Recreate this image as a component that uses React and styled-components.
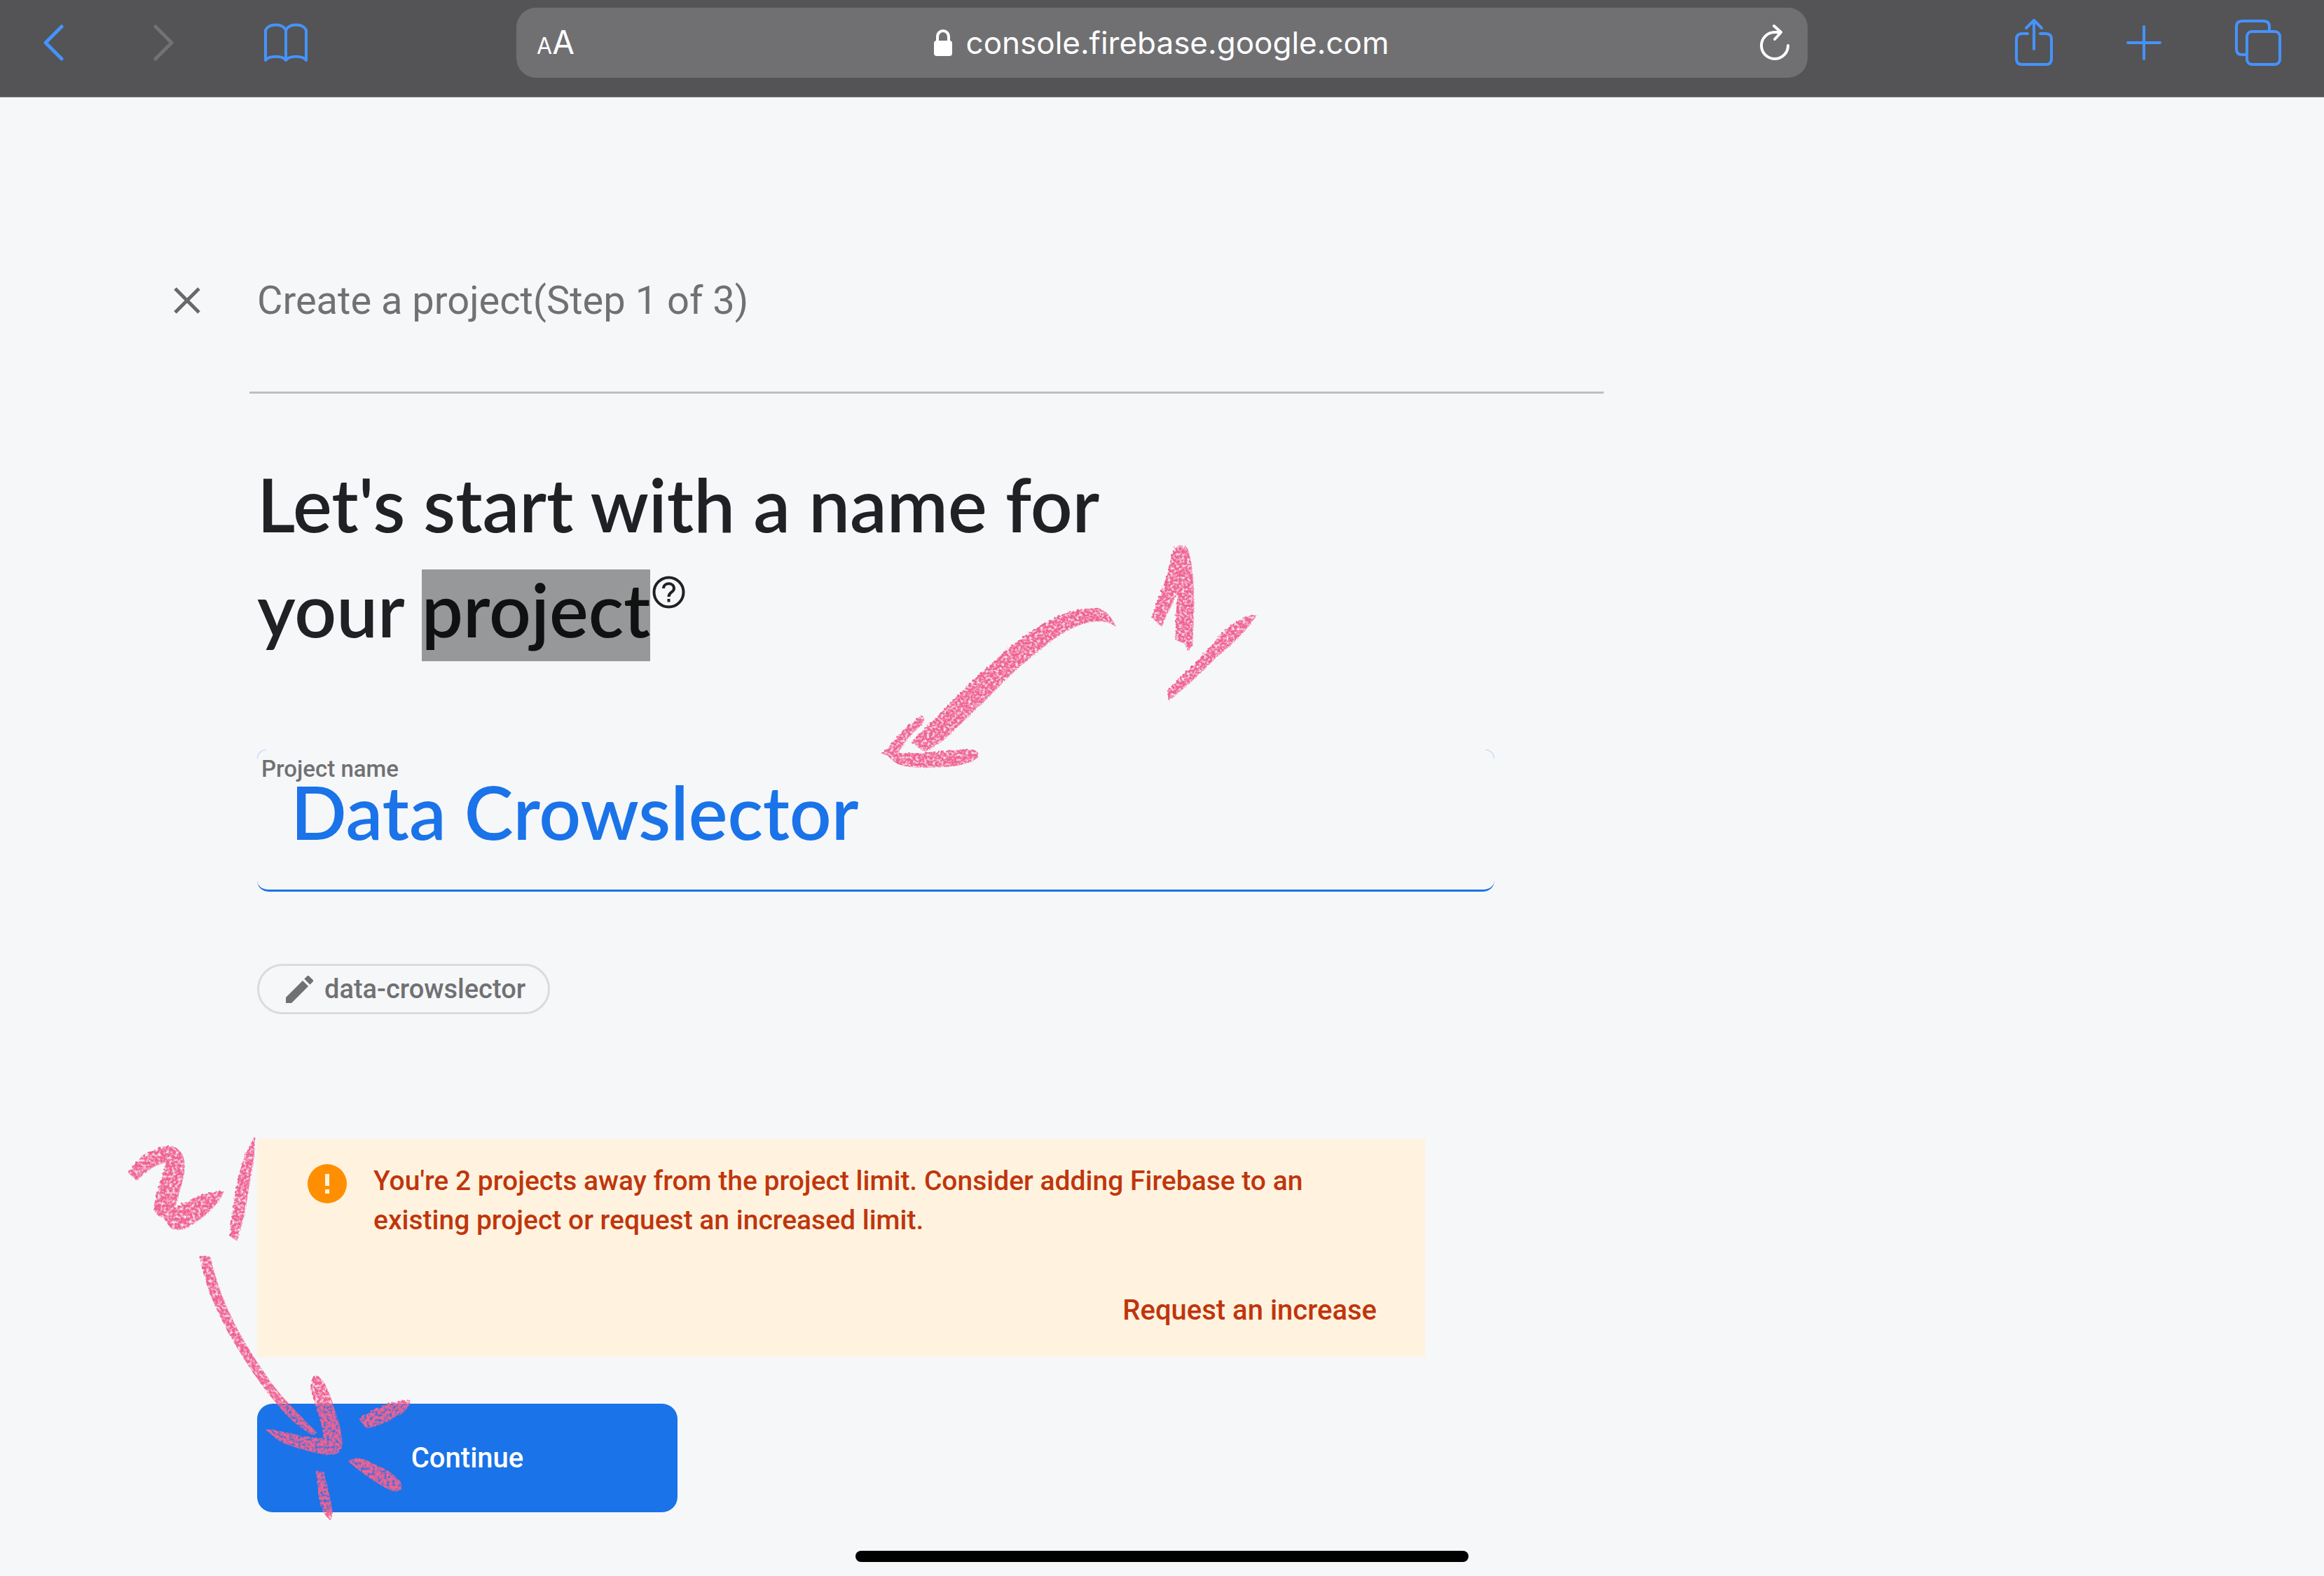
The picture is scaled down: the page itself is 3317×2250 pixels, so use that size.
import React from "react";
import styled, { createGlobalStyle } from "styled-components";

const ui = `"Inter", "Liberation Sans", sans-serif`;
const roboto = `"Roboto", "Liberation Sans", sans-serif`;
const display = `"Lato", "Open Sans", sans-serif`;

const blue = "#1a73e8";
const safariBlue = "#4593ff";
const grey = "#707173";
const rust = "#bf360c";

const GlobalStyle = createGlobalStyle`
  *, *::before, *::after { box-sizing: border-box; }
  body { margin: 0; background: #f6f7f9; font-family: ${roboto}; }
  button, input { font: inherit; margin: 0; padding: 0; border: 0; background: none; }
  h1, p { margin: 0; font-weight: inherit; }
  svg { display: block; }
`;

const Page = styled.div`
  position: relative;
  min-height: 100vh;
  display: flex;
  flex-direction: column;
`;

const Toolbar = styled.header`
  display: grid;
  grid-template-columns: 2fr 5fr 2fr;
  align-items: center;
  padding: 11px 0 27px;
  background: #545456;
  border-bottom: 1px solid #77787a;
`;

const ToolGroup = styled.nav`
  display: flex;
  align-items: center;
  justify-content: ${(p) => (p.$end ? "flex-end" : "flex-start")};
  gap: ${(p) => (p.$end ? 105 : 128)}px;
  padding: 0 61px;
`;

const IconButton = styled.button`
  flex: none;
  color: ${(p) => p.$color || safariBlue};
`;

const AddressBar = styled.div`
  display: grid;
  grid-template-columns: 1fr auto 1fr;
  align-items: center;
  height: 100px;
  padding: 0 25px 0 29px;
  border-radius: 28px;
  background: #707072;
  color: #fff;
  font-family: ${ui};
`;

const TextSize = styled.button`
  justify-self: start;
  display: flex;
  align-items: baseline;
  padding-top: 4px;
  color: #fff;
  font-size: 46px;
  line-height: 60px;
`;

const SmallA = styled.span`
  font-size: 32px;
`;

const Url = styled.span`
  display: flex;
  align-items: center;
  gap: 20px;
  padding-right: 6px;
  font-size: 44px;
  line-height: 60px;
`;

const Reload = styled(IconButton)`
  justify-self: end;
`;

const Main = styled.main`
  padding: 258px 248px 0;
`;

const StepBar = styled.div`
  display: flex;
  align-items: center;
  gap: 81px;
  color: ${grey};
  font-size: 56px;
  line-height: 64px;
`;

const Divider = styled.hr`
  height: 3px;
  max-width: 1933px;
  margin: 98px 0 0 108px;
  border: 0;
  background: #bdbec0;
`;

const Form = styled.form`
  display: flex;
  flex-direction: column;
  align-items: flex-start;
  padding-left: 119px;
`;

const Heading = styled.h1`
  max-width: 1300px;
  margin-top: 82px;
  color: #202124;
  font-family: ${display};
  font-size: 105px;
  font-weight: 600;
  line-height: 150px;
`;

const Selected = styled.mark`
  display: inline-block;
  padding-bottom: 18px;
  line-height: 113px;
  background: #969899;
  color: #111;
`;

const Help = styled.button`
  margin-left: 3px;
  vertical-align: 41px;
  color: #202124;
`;

const Field = styled.div`
  position: relative;
  display: flex;
  flex-direction: column;
  width: 100%;
  max-width: 1766px;
  height: 203px;
  margin-top: 126px;
  padding: 12px 6px 0;
  border-bottom: 3px solid ${blue};
  border-radius: 16px;

  &::before,
  &::after {
    content: "";
    position: absolute;
    top: 0;
    width: 13px;
    height: 13px;
    border-top: 1px solid #b7d2f8;
  }
  &::before {
    left: 0;
    border-left: 1px solid #b7d2f8;
    border-top-left-radius: 13px;
  }
  &::after {
    right: 0;
    border-right: 1px solid #b7d2f8;
    border-top-right-radius: 13px;
  }
`;

const FieldLabel = styled.label`
  color: ${grey};
  font-size: 33px;
  font-weight: 500;
  line-height: 32px;
`;

const FieldInput = styled.input`
  width: 100%;
  height: 88px;
  padding: 0 42px;
  outline: 0;
  color: ${blue};
  font-family: ${display};
  font-size: 105px;
  font-weight: 600;
`;

const Chip = styled.button`
  display: flex;
  align-items: center;
  gap: 16px;
  height: 72px;
  margin-top: 103px;
  padding: 0 32px 0 38px;
  border: 3px solid #dadbdd;
  border-radius: 36px;
  color: ${grey};
  font-size: 38px;
  font-weight: 500;
`;

const Warning = styled.section`
  display: grid;
  grid-template-columns: 56px 1fr;
  column-gap: 38px;
  width: 100%;
  max-width: 1667px;
  height: 311px;
  margin-top: 178px;
  padding: 32px 69px 38px 72px;
  background: #fff3e0;
  color: ${rust};
  font-size: 39px;
  font-weight: 500;
  line-height: 56px;
`;

const WarningIcon = styled.svg`
  margin-top: 4px;
`;

const WarningText = styled.p`
  max-width: 1400px;
`;

const WarningLink = styled.a`
  grid-column: 1 / -1;
  align-self: end;
  justify-self: end;
  color: inherit;
  font-size: 40px;
  text-decoration: none;
`;

const Continue = styled.button`
  width: 600px;
  height: 155px;
  margin-top: 67px;
  border-radius: 22px;
  background: ${blue};
  color: #fff;
  font-size: 40px;
  font-weight: 500;
`;

const HomeIndicator = styled.div`
  width: 875px;
  height: 16px;
  margin: auto auto 20px;
  border-radius: 8px;
  background: #000;
`;

const Sketch = styled.svg`
  position: absolute;
  left: ${(p) => p.$x}px;
  top: ${(p) => p.$y}px;
  overflow: visible;
  pointer-events: none;
`;

const line = {
  fill: "none",
  stroke: "currentColor",
  strokeWidth: 4,
  strokeLinecap: "round",
  strokeLinejoin: "round",
  "aria-hidden": true,
};

function Chalk({ id, seed, paths, ...rest }) {
  return (
    <Sketch preserveAspectRatio="none" aria-hidden="true" {...rest}>
      <filter id={id} x="-5%" y="-5%" width="110%" height="110%">
        <feTurbulence type="fractalNoise" baseFrequency="0.1" numOctaves="3" seed={seed} result="noise" />
        <feDisplacementMap in="SourceGraphic" in2="noise" scale="12" result="rough" />
        <feColorMatrix in="noise" type="matrix" values="0 0 0 0 0  0 0 0 0 0  0 0 0 0 0  0 0 0 2.6 -0.5" result="grain" />
        <feComposite in="rough" in2="grain" operator="in" />
      </filter>
      <g fill="#f06292" stroke="#f06292" strokeWidth="3" filter={`url(#${id})`}>
        {paths.map((d) => (
          <path key={d} d={d} />
        ))}
      </g>
    </Sketch>
  );
}

const stepOne = [
  "M205 960C260 890 330 820 380 750C450 670 520 590 590 525C680 440 780 385 860 386C900 385 925 420 940 460C915 440 880 435 840 445C760 470 700 530 630 600C560 660 500 750 420 835C370 890 320 960 260 995C240 1000 230 970 205 960Z",
  "M100 1008C130 980 170 900 240 848C255 850 250 870 240 885C200 920 180 960 155 1005Z",
  "M100 1005C180 1015 300 1000 400 991C440 992 450 1005 445 1020C420 1060 330 1066 260 1066C180 1066 150 1060 120 1015Z",
  "M1155 125L1195 122L1190 240L1170 310C1150 350 1125 410 1108 462L1075 425C1085 370 1110 310 1130 240C1140 200 1140 160 1155 125Z",
  "M1155 125C1170 118 1195 118 1200 130C1215 170 1222 280 1224 350C1222 420 1220 500 1218 545L1203 565L1190 535L1160 520C1155 450 1165 380 1166 320Z",
  "M1450 415C1420 470 1370 530 1300 600C1260 650 1190 725 1135 778L1128 740C1180 680 1260 590 1320 500C1360 455 1400 420 1450 415Z",
];

const stepTwo = [
  "M58 220C90 165 150 125 200 122C245 128 255 165 252 210C248 260 228 300 218 355C260 330 320 290 390 290C370 340 330 375 290 405C260 430 230 438 205 425L180 385C160 385 145 365 148 340C160 290 170 250 190 182C150 185 120 215 85 248Z",
  "M498 88C500 160 485 220 475 290C468 350 455 410 436 472L412 455C420 380 430 300 445 230C455 180 475 130 498 88Z",
  "M308 532L342 535C355 590 375 670 410 745C450 840 500 920 560 1010C600 1070 660 1130 715 1190L705 1198C650 1175 590 1100 560 1060C500 980 440 880 400 800C360 720 320 620 308 532Z",
  "M715 978C740 990 755 1030 770 1080C785 1130 800 1170 804 1230C800 1270 780 1275 740 1270C680 1258 610 1235 585 1220L540 1180C600 1180 670 1215 740 1212C740 1160 715 1100 700 1040C695 1010 700 985 715 978Z",
  "M865 1140C920 1100 980 1068 1040 1070C1040 1095 1020 1115 990 1130C950 1155 920 1170 890 1172Z",
  "M825 1295C850 1285 880 1285 900 1300C940 1320 990 1345 1005 1370C1020 1395 1010 1408 985 1408C940 1390 890 1350 865 1330Z",
  "M715 1335L740 1335C750 1390 765 1440 770 1490L765 1515C735 1500 720 1430 722 1400Z",
];

export default function App() {
  return (
    <Page>
      <GlobalStyle />
      <Toolbar>
        <ToolGroup aria-label="History">
          <IconButton type="button" aria-label="Back">
            <svg {...line} width="30" height="54" viewBox="0 0 30 54" strokeWidth="5">
              <path d="M27 4L4 27L27 50" />
            </svg>
          </IconButton>
          <IconButton type="button" aria-label="Forward" $color="#727274">
            <svg {...line} width="30" height="54" viewBox="0 0 30 54" strokeWidth="5">
              <path d="M3 4L26 27L3 50" />
            </svg>
          </IconButton>
          <IconButton type="button" aria-label="Bookmarks">
            <svg {...line} width="62" height="56" viewBox="0 0 62 56">
              <path d="M31 10C26 0 7 0 2 10V53C7 46 26 46 31 53C36 46 55 46 60 53V10C55 0 36 0 31 10V53" />
            </svg>
          </IconButton>
        </ToolGroup>
        <AddressBar>
          <TextSize type="button" aria-label="Text size">
            <SmallA>A</SmallA>A
          </TextSize>
          <Url>
            <svg width="26" height="38" viewBox="0 0 26 38" aria-hidden="true">
              <rect x="0" y="16" width="26" height="22" rx="4" fill="currentColor" />
              <path d="M5 18V11C5 -1 21 -1 21 11V18" fill="none" stroke="currentColor" strokeWidth="4" />
            </svg>
            console.firebase.google.com
          </Url>
          <Reload type="button" aria-label="Reload" $color="#fff">
            <svg {...line} width="44" height="54" viewBox="0 0 44 54">
              <path d="M41 31A19 19 0 1 1 22 12H30M21 3L31 12L22 22" />
            </svg>
          </Reload>
        </AddressBar>
        <ToolGroup $end aria-label="Tabs">
          <IconButton type="button" aria-label="Share">
            <svg {...line} width="54" height="70" viewBox="0 0 54 70">
              <path d="M18 22H10Q2 22 2 30V58Q2 66 10 66H44Q52 66 52 58V30Q52 22 44 22H36M27 44V3M16 14L27 3L38 14" />
            </svg>
          </IconButton>
          <IconButton type="button" aria-label="New tab">
            <svg {...line} width="50" height="50" viewBox="0 0 50 50">
              <path d="M25 2V48M2 25H48" />
            </svg>
          </IconButton>
          <IconButton type="button" aria-label="All tabs">
            <svg {...line} width="66" height="66" viewBox="0 0 66 66">
              <rect x="17" y="17" width="47" height="47" rx="7" />
              <path d="M16 50H10Q2 50 2 42V10Q2 2 10 2H41Q49 2 49 10V16" />
            </svg>
          </IconButton>
        </ToolGroup>
      </Toolbar>

      <Main>
        <StepBar>
          <IconButton type="button" aria-label="Close" $color="#67686a">
            <svg {...line} width="38" height="40" viewBox="0 0 38 40" strokeWidth="5" strokeLinecap="butt">
              <path d="M2 3L36 37M36 3L2 37" />
            </svg>
          </IconButton>
          <p>Create a project(Step 1 of 3)</p>
        </StepBar>
        <Divider />
        <Form onSubmit={(e) => e.preventDefault()}>
          <Heading>
            Let's start with a name for
            <br />
            your <Selected>project</Selected>
            <Help type="button" aria-label="What is a project?">
              <svg {...line} width="47" height="47" viewBox="0 0 47 47">
                <circle cx="23.5" cy="23.5" r="21" />
                <path d="M16 18C16 9 31 9 31 18C31 24 23.500 23 23.500 30" strokeLinecap="butt" />
                <path d="M23.500 33V37.500" strokeLinecap="butt" />
              </svg>
            </Help>
          </Heading>
          <Field>
            <FieldLabel htmlFor="project-name">Project name</FieldLabel>
            <FieldInput id="project-name" type="text" defaultValue="Data Crowslector" spellCheck={false} />
          </Field>
          <Chip type="button">
            <svg width="39" height="39" viewBox="3 3 18 18" fill="currentColor" aria-hidden="true">
              <path d="M3 17.250V21h3.750L17.810 9.940l-3.750-3.750L3 17.250zM20.710 7.040a1 1 0 0 0 0-1.410l-2.340-2.340a1 1 0 0 0-1.410 0l-1.830 1.830 3.750 3.750 1.830-1.830z" />
            </svg>
            data-crowslector
          </Chip>
          <Warning>
            <WarningIcon width="56" height="56" viewBox="0 0 56 56" aria-hidden="true">
              <circle cx="28" cy="28" r="28" fill="#ff8f00" />
              <path d="M25 14H31V31H25ZM25 36H31V42H25Z" fill="#fff3e0" />
            </WarningIcon>
            <WarningText>
              You're 2 projects away from the project limit. Consider adding Firebase to an existing project or
              request an increased limit.
            </WarningText>
            <WarningLink href="#increase">Request an increase</WarningLink>
          </Warning>
          <Continue type="submit">Continue</Continue>
        </Form>
      </Main>
      <HomeIndicator />

      <Chalk id="chalk-one" seed="3" $x={1220} $y={740} width="620" height="380" viewBox="0 0 1568 1140" paths={stepOne} />
      <Chalk id="chalk-two" seed="8" $x={160} $y={1590} width="640" height="600" viewBox="0 0 1568 1568" paths={stepTwo} />
    </Page>
  );
}
